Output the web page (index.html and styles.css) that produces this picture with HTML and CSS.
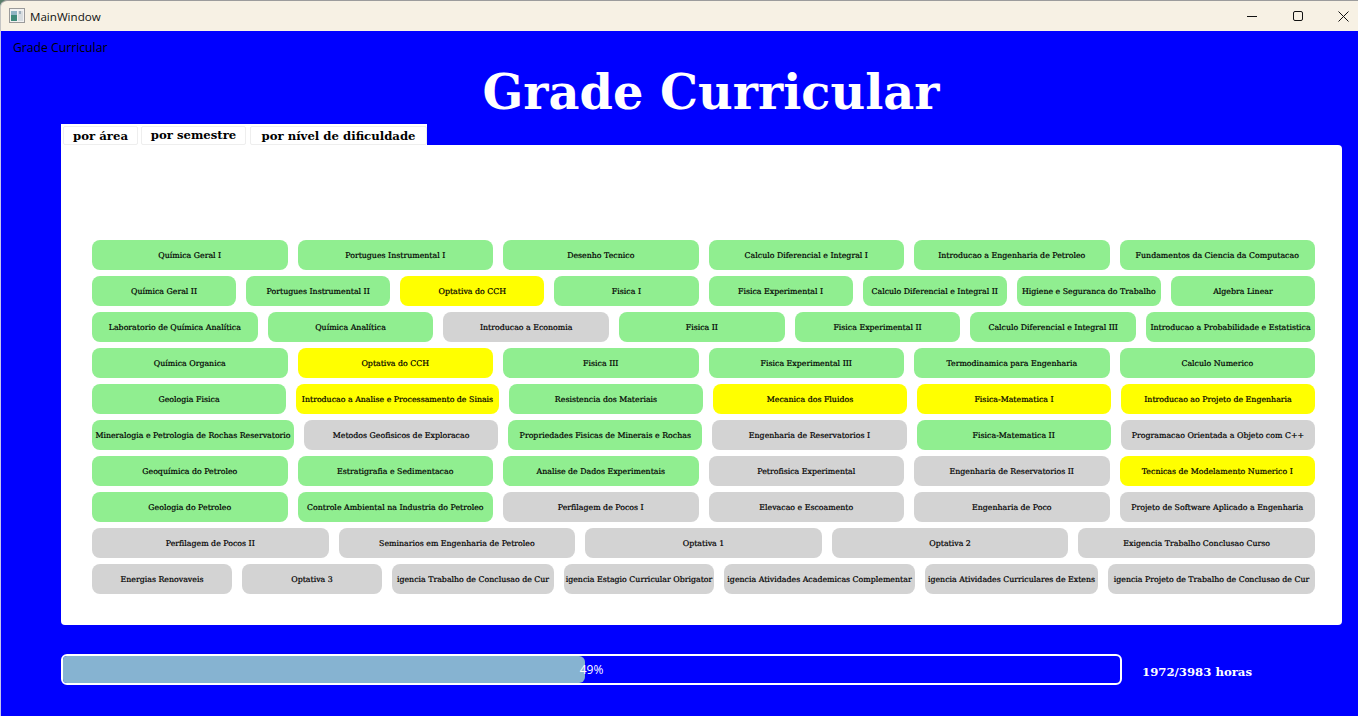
FILE: index.html
```html
<!DOCTYPE html>
<html lang="pt">
<head>
<meta charset="utf-8">
<title>MainWindow</title>
<link rel="stylesheet" href="styles.css">
</head>
<body>
<div class="window">
  <header class="titlebar">
    <div class="title-left">
      <svg class="app-icon" width="16" height="16" viewBox="0 0 16 16"><rect x="0.5" y="0.5" width="15" height="14" fill="#f2f2f2" stroke="#9a9a9a"/><rect x="2" y="3" width="6" height="10" fill="#3f8a7a"/><rect x="2" y="3" width="6" height="4" fill="#8fb4c4"/><rect x="9" y="3" width="5" height="10" fill="#d8dde0"/><rect x="10" y="3" width="2" height="3" fill="#9fb0bc"/></svg>
      <span>MainWindow</span>
    </div>
    <div class="controls">
      <svg class="ctl" width="11" height="11" viewBox="0 0 11 11"><path d="M1 5.5h10" stroke="#111" fill="none"/></svg>
      <svg class="ctl" width="11" height="11" viewBox="0 0 11 11"><rect x="1.5" y="0.5" width="9" height="9" rx="1.5" stroke="#111" fill="none"/></svg>
      <svg class="ctl" width="11" height="11" viewBox="0 0 11 11"><path d="M0.5 0.5l10 10M10.5 0.5l-10 10" stroke="#111" fill="none"/></svg>
    </div>
  </header>
  <main class="content">
    <div class="menu">Grade Curricular</div>
    <h1 class="heading">Grade Curricular</h1>
    <div class="tabs">
      <div class="tab t1">por área</div>
      <div class="tab t2 raised">por semestre</div>
      <div class="tab t3">por nível de dificuldade</div>
    </div>
    <section class="panel">
      <div class="row">
        <div class="c g">Química Geral I</div>
        <div class="c g">Portugues Instrumental I</div>
        <div class="c g">Desenho Tecnico</div>
        <div class="c g">Calculo Diferencial e Integral I</div>
        <div class="c g">Introducao a Engenharia de Petroleo</div>
        <div class="c g">Fundamentos da Ciencia da Computacao</div>
      </div>
      <div class="row">
        <div class="c g">Química Geral II</div>
        <div class="c g">Portugues Instrumental II</div>
        <div class="c y">Optativa do CCH</div>
        <div class="c g">Fisica I</div>
        <div class="c g">Fisica Experimental I</div>
        <div class="c g">Calculo Diferencial e Integral II</div>
        <div class="c g">Higiene e Seguranca do Trabalho</div>
        <div class="c g">Algebra Linear</div>
      </div>
      <div class="row">
        <div class="c g">Laboratorio de Química Analítica</div>
        <div class="c g">Química Analítica</div>
        <div class="c n">Introducao a Economia</div>
        <div class="c g">Fisica II</div>
        <div class="c g">Fisica Experimental II</div>
        <div class="c g">Calculo Diferencial e Integral III</div>
        <div class="c g m169">Introducao a Probabilidade e Estatistica</div>
      </div>
      <div class="row">
        <div class="c g">Química Organica</div>
        <div class="c y">Optativa do CCH</div>
        <div class="c g">Fisica III</div>
        <div class="c g">Fisica Experimental III</div>
        <div class="c g">Termodinamica para Engenharia</div>
        <div class="c g">Calculo Numerico</div>
      </div>
      <div class="row">
        <div class="c g">Geologia Fisica</div>
        <div class="c y m203">Introducao a Analise e Processamento de Sinais</div>
        <div class="c g">Resistencia dos Materiais</div>
        <div class="c y">Mecanica dos Fluidos</div>
        <div class="c y">Fisica-Matematica I</div>
        <div class="c y">Introducao ao Projeto de Engenharia</div>
      </div>
      <div class="row">
        <div class="c g m202">Mineralogia e Petrologia de Rochas Reservatorio</div>
        <div class="c n">Metodos Geofisicos de Exploracao</div>
        <div class="c g">Propriedades Fisicas de Minerais e Rochas</div>
        <div class="c n">Engenharia de Reservatorios I</div>
        <div class="c g">Fisica-Matematica II</div>
        <div class="c n">Programacao Orientada a Objeto com C++</div>
      </div>
      <div class="row">
        <div class="c g">Geoquímica do Petroleo</div>
        <div class="c g">Estratigrafia e Sedimentacao</div>
        <div class="c g">Analise de Dados Experimentais</div>
        <div class="c n">Petrofisica Experimental</div>
        <div class="c n">Engenharia de Reservatorios II</div>
        <div class="c y">Tecnicas de Modelamento Numerico I</div>
      </div>
      <div class="row">
        <div class="c g">Geologia do Petroleo</div>
        <div class="c g">Controle Ambiental na Industria do Petroleo</div>
        <div class="c n">Perfilagem de Pocos I</div>
        <div class="c n">Elevacao e Escoamento</div>
        <div class="c n">Engenharia de Poco</div>
        <div class="c n">Projeto de Software Aplicado a Engenharia</div>
      </div>
      <div class="row">
        <div class="c n">Perfilagem de Pocos II</div>
        <div class="c n">Seminarios em Engenharia de Petroleo</div>
        <div class="c n">Optativa 1</div>
        <div class="c n">Optativa 2</div>
        <div class="c n">Exigencia Trabalho Conclusao Curso</div>
      </div>
      <div class="row">
        <div class="c n w140">Energias Renovaveis</div>
        <div class="c n w140">Optativa 3</div>
        <div class="c n w162">igencia Trabalho de Conclusao de Cur</div>
        <div class="c n w150">igencia Estagio Curricular Obrigator</div>
        <div class="c n w191">igencia Atividades Academicas Complementar</div>
        <div class="c n w173">igencia Atividades Curriculares de Extens</div>
        <div class="c n w207">igencia Projeto de Trabalho de Conclusao de Cur</div>
      </div>
    </section>
    <div class="progress-row">
      <div class="bar">
        <div class="fill" style="width:49.4%"></div>
        <div class="pct">49%</div>
      </div>
      <div class="hours">1972/3983 horas</div>
    </div>
  </main>
</div>
</body>
</html>
```
FILE: styles.css
```css
* { box-sizing: border-box; }
html, body { margin: 0; padding: 0; height: 100%; overflow: hidden; }
body { background: #0000ff; }
.window { width: 1358px; height: 716px; display: flex; flex-direction: column; background: #5a7d6a; }
.titlebar {
  height: 31px; flex: none; background: #f7f1e4; border-top: 1px solid #9c9c9c; border-left: 1px solid #c4c4c4;
  border-top-left-radius: 7px;
  display: flex; align-items: center; justify-content: space-between;
  font: 11.6px "Open Sans", "Noto Sans", sans-serif; color: #111;
}
.title-left { display: flex; align-items: center; gap: 5px; padding-left: 8px; }
.controls { display: flex; gap: 35px; padding-right: 9px; }
.ctl { display: block; }
.content { flex: 1; background: #0000ff; border-left: 1px solid #c4c4ee; display: flex; flex-direction: column; }
.menu { height: 24px; padding: 9px 0 0 12px; font: 12.2px/16px "Open Sans", "Noto Sans", sans-serif; color: #000; }
.heading {
  margin: 0; height: 69px; text-align: center; color: #fff;
  font: bold 47.8px/74px "DejaVu Serif", serif; padding-left: 63px;
}
.tabs {
  margin-left: 60px; width: 366px; height: 21px; background: #fff; display: flex;
  padding: 2px 0 0 2px; gap: 3px;
  font: bold 11.7px/1 "DejaVu Serif", serif; color: #000;
}
.tab {
  height: 19px; border: 1px solid #eee; border-radius: 2px;
  display: flex; align-items: center; justify-content: center; padding-top: 3px;
}
.tab.raised { padding-top: 1px; }
.t1 { width: 75px; }
.t2 { width: 105px; }
.t3 { width: 177px; margin-left: 1px; }
.panel {
  margin-left: 60px; width: 1281px; height: 480px; background: #fff; border-radius: 0 4px 4px 4px;
  padding: 95px 27px 0 31px; display: flex; flex-direction: column; gap: 6px;
}
.row { display: flex; gap: 10px; height: 30px; }
.c {
  flex: 1 1 0; min-width: 0; height: 30px; border-radius: 8px; padding-top: 2px;
  display: flex; align-items: center; justify-content: center; white-space: nowrap;
  font: 7.85px/1 "DejaVu Serif", serif; color: #000; -webkit-text-stroke: 0.2px #000;
}
.g { background: #90ee90; }
.y { background: #ffff00; }
.n { background: #d3d3d3; }
.m169 { flex: 0 0 169px; }
.m203 { flex: 0 0 203px; }
.m202 { flex: 0 0 202px; }
.w140 { flex: 0 0 140px; }
.w162 { flex: 0 0 162px; }
.w150 { flex: 0 0 150px; }
.w191 { flex: 0 0 191px; }
.w173 { flex: 0 0 173px; }
.w207 { flex: 0 0 207px; }
.progress-row { margin: 29px 0 0 60px; display: flex; align-items: center; gap: 20px; }
.bar {
  position: relative; width: 1061px; height: 31px; border: 2px solid #fff; border-radius: 6px;
  background: #0000ff; overflow: hidden;
}
.fill { height: 100%; background: #86b3d1; border-radius: 0 6px 6px 0; }
.pct {
  position: absolute; inset: 0; display: flex; align-items: center; justify-content: center;
  color: #fff; font: 12px "Open Sans", "Noto Sans", sans-serif; padding-bottom: 1px;
}
.hours { color: #fff; font: bold 11.7px/1 "DejaVu Serif", serif; padding-top: 7px; }
```
